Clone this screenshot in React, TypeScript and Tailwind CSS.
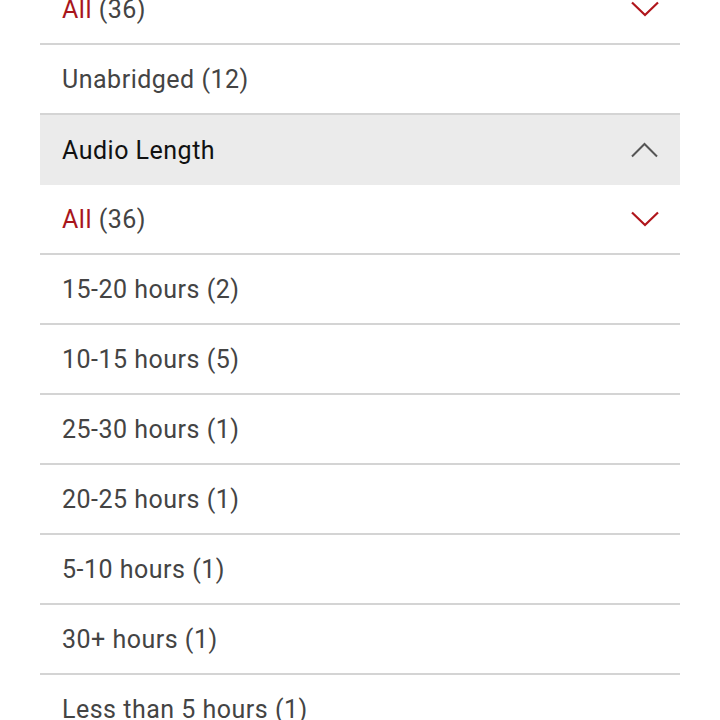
import React from 'react';

const lengths = [
  '15-20 hours (2)',
  '10-15 hours (5)',
  '25-30 hours (1)',
  '20-25 hours (1)',
  '5-10 hours (1)',
  '30+ hours (1)',
  'Less than 5 hours (1)',
];

function ChevronDown() {
  return (
    <svg width="30" height="16" viewBox="0 0 30 16" fill="none" className="text-[#b0161c]">
      <path d="M2 1.5 L15 14 L28 1.5" stroke="currentColor" strokeWidth="2.2" />
    </svg>
  );
}

function ChevronUp() {
  return (
    <svg width="30" height="16" viewBox="0 0 30 16" fill="none" className="text-[#555]">
      <path d="M2 14.5 L14.5 2 L27 14.5" stroke="currentColor" strokeWidth="2" />
    </svg>
  );
}

function Row({ children, right }: { children: React.ReactNode; right?: React.ReactNode }) {
  return (
    <div className="h-[70px] flex items-center justify-between pl-[22px] pr-5 border-b-2 border-[#d4d4d4]">
      <span className="mt-[2px] text-[25px] tracking-[0.5px] text-[#444]">{children}</span>
      {right}
    </div>
  );
}

export default function App() {
  return (
    <div className="w-[720px] h-[720px] overflow-hidden bg-white" style={{ fontFamily: 'Roboto, "Liberation Sans", sans-serif' }}>
      <div className="mx-10 -mt-[25px]">
        <Row right={<ChevronDown />}>
          <span className="text-[#a8161c]">All</span> (36)
        </Row>
        <Row>Unabridged (12)</Row>
        <div className="h-[70px] flex items-center justify-between pl-[22px] pr-5 bg-[#ebebeb]">
          <span className="mt-[2px] text-[25px] tracking-[0.5px] text-[#111]">Audio Length</span>
          <ChevronUp />
        </div>
        <Row right={<ChevronDown />}>
          <span className="text-[#a8161c]">All</span> (36)
        </Row>
        {lengths.map((l) => (
          <Row key={l}>{l}</Row>
        ))}
      </div>
    </div>
  );
}
